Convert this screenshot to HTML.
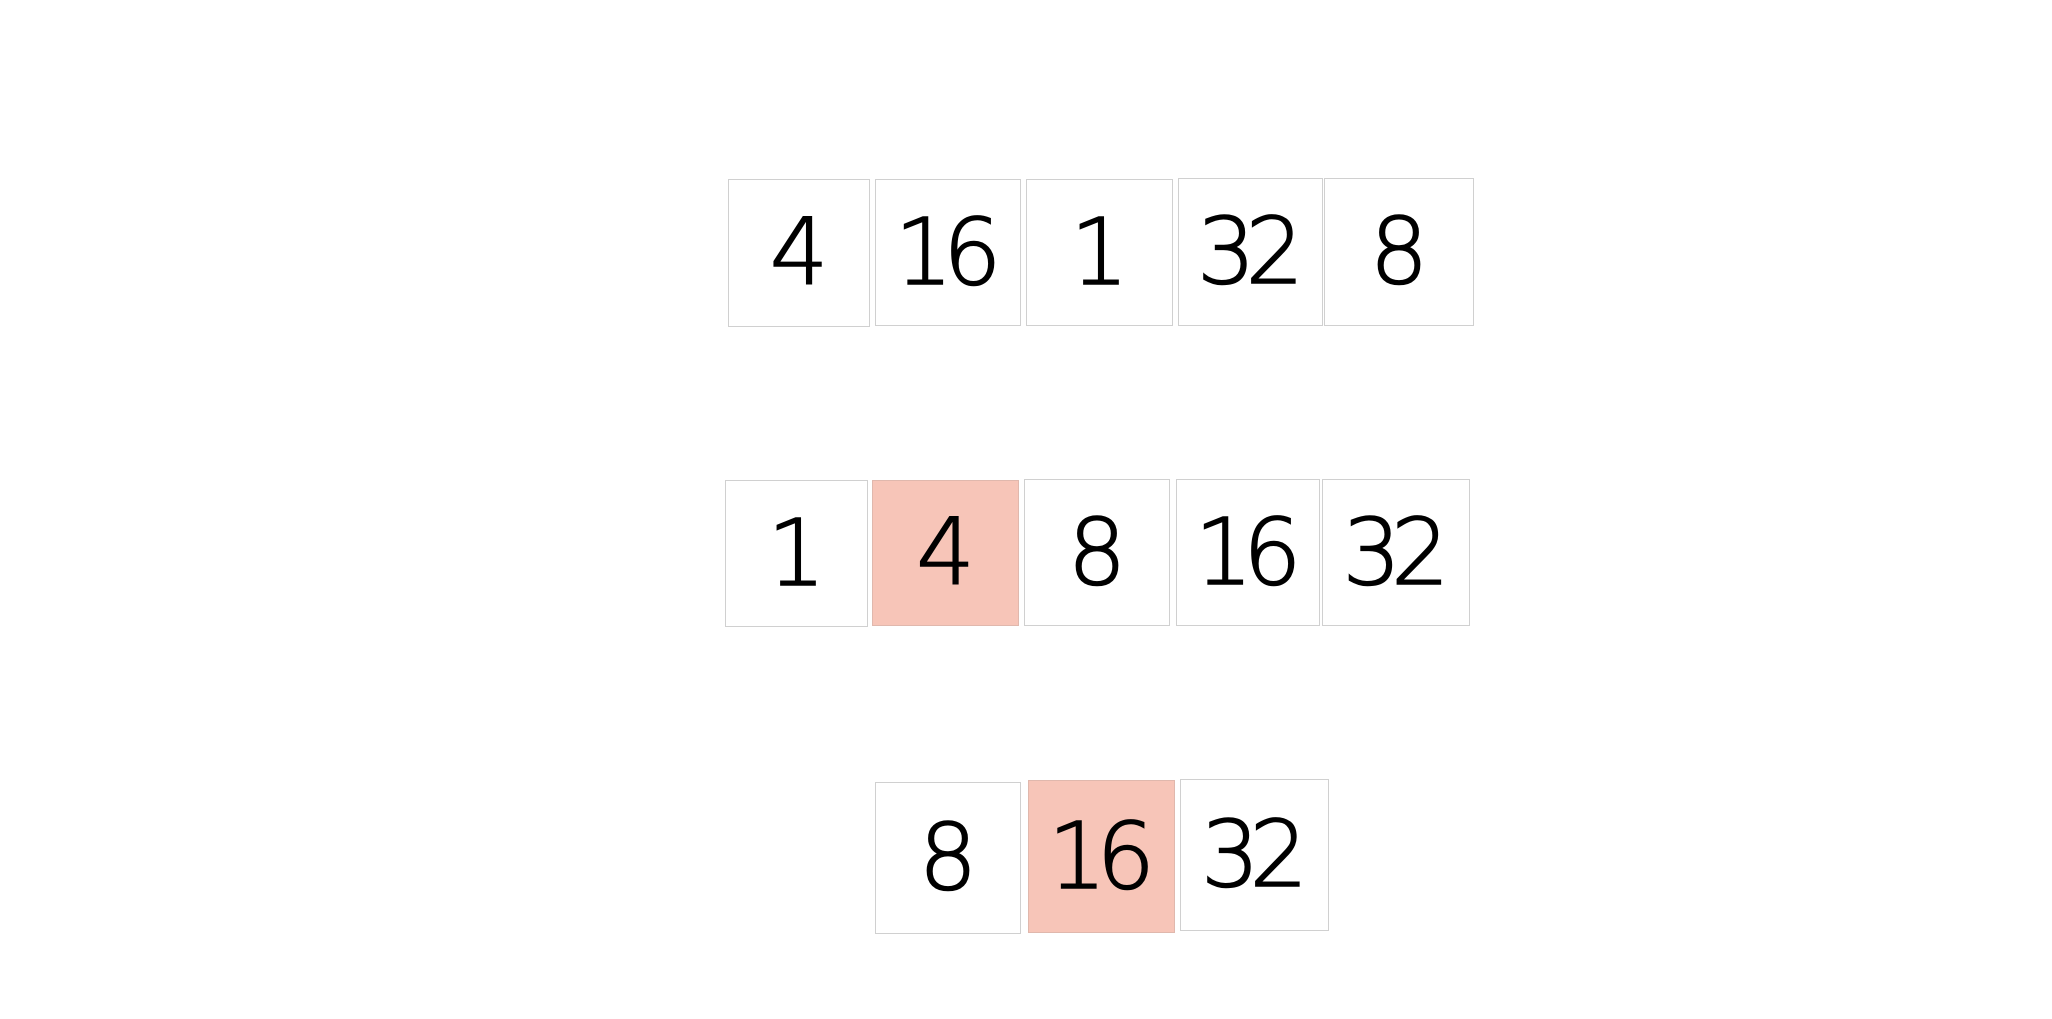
<!DOCTYPE html>
<html><head><meta charset="utf-8"><style>
html,body{margin:0;padding:0;background:#fff;}
body{width:2052px;height:1019px;position:relative;overflow:hidden;}
.b{position:absolute;box-sizing:border-box;border:1px solid #d0d0d0;background:#fff;display:flex;align-items:center;justify-content:center;font-family:"DejaVu Sans","Liberation Sans",sans-serif;font-weight:200;font-size:92px;color:#000;line-height:1;-webkit-text-stroke:1.6px #000;letter-spacing:-10px;}
.b span{margin-right:10px;}
.p{background:#f7c5b8;border-color:#e0b8ad;}
</style></head><body>
<div class="b" style="left:728px;top:179px;width:142px;height:148px"><span>4</span></div>
<div class="b" style="left:875px;top:179px;width:146px;height:147px"><span>16</span></div>
<div class="b" style="left:1026px;top:179px;width:147px;height:147px"><span>1</span></div>
<div class="b" style="left:1178px;top:178px;width:145px;height:148px"><span>32</span></div>
<div class="b" style="left:1324px;top:178px;width:150px;height:148px"><span>8</span></div>

<div class="b" style="left:725px;top:480px;width:143px;height:147px"><span>1</span></div>
<div class="b p" style="left:872px;top:480px;width:147px;height:146px"><span>4</span></div>
<div class="b" style="left:1024px;top:479px;width:146px;height:147px"><span>8</span></div>
<div class="b" style="left:1176px;top:479px;width:144px;height:147px"><span>16</span></div>
<div class="b" style="left:1322px;top:479px;width:148px;height:147px"><span>32</span></div>

<div class="b" style="left:875px;top:782px;width:146px;height:152px"><span>8</span></div>
<div class="b p" style="left:1028px;top:780px;width:147px;height:153px"><span>16</span></div>
<div class="b" style="left:1180px;top:779px;width:149px;height:152px"><span>32</span></div>
</body></html>
